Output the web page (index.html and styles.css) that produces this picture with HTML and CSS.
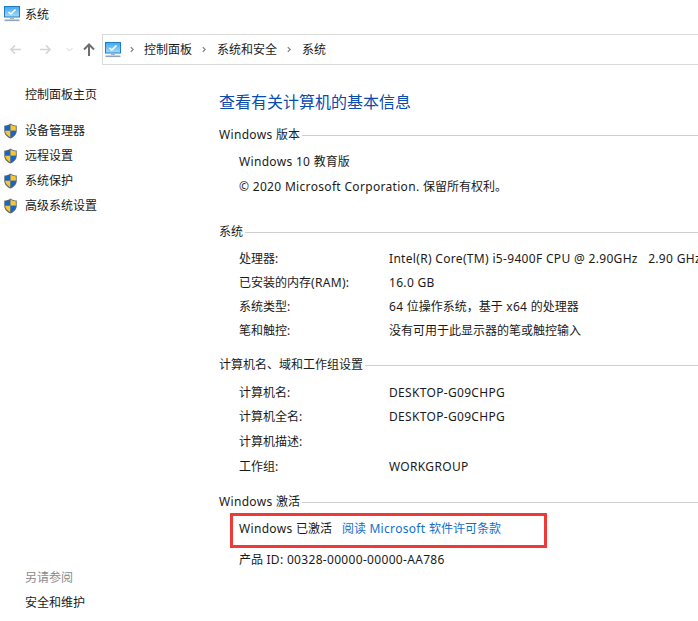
FILE: index.html
```html
<!DOCTYPE html>
<html lang="zh-CN">
<head>
<meta charset="utf-8">
<title>系统</title>
<link rel="stylesheet" href="styles.css">
</head>
<body>
<svg class="defs" width="0" height="0" aria-hidden="true">
  <defs>
    <linearGradient id="scr" x1="0" y1="0" x2="0" y2="1"><stop offset="0" stop-color="#3fa9ee"/><stop offset="1" stop-color="#a6dcfa"/></linearGradient>
    <symbol id="pc" viewBox="0 0 16 16">
      <rect x="0.5" y="0.5" width="15" height="10.5" fill="url(#scr)" stroke="#1f7fc4"/>
      <path d="M4.5 6l2.4 2 4.6-4.5" fill="none" stroke="#fff" stroke-width="1.6"/>
      <rect x="6" y="11.5" width="4" height="1.5" fill="#9fb2c2"/>
      <rect x="0.5" y="13.5" width="15" height="1.6" fill="#8ea3b5"/>
    </symbol>
    <symbol id="shield" viewBox="0 0 16 18">
      <path d="M8 0.5c2 1.600 4.400 2.300 7 2.400v6c0 3.800-3 6.600-7 8.600-4-2-7-4.800-7-8.600v-6c2.600-.1 5-.8 7-2.400z" fill="#5b6470"/>
      <path d="M8 1.800v7H2V3.800c2.200-.2 4.200-.8 6-2z" fill="#1467c8"/>
      <path d="M8 1.800c1.800 1.200 3.800 1.800 6 2v5H8z" fill="#f7c631"/>
      <path d="M2 8.800h6v7.500c-3.400-1.800-6-4.200-6-7.500z" fill="#f7c631"/>
      <path d="M8 8.800h6c0 3.300-2.600 5.700-6 7.500z" fill="#1467c8"/>
    </symbol>
  </defs>
</svg>
<div class="page">
  <header class="titlebar">
    <svg class="title-icon"><use href="#pc"/></svg>
    <span>系统</span>
  </header>
  <nav class="navbar">
    <div class="nav-buttons">
      <svg class="nav-arrow" viewBox="0 0 14 12"><path d="M13 6H2M6.500 1.500L2 6l4.500 4.500" class="arrow-light"/></svg>
      <svg class="nav-arrow fwd" viewBox="0 0 14 12"><path d="M1 6h11M7.500 1.500L12 6l-4.500 4.500" class="arrow-light"/></svg>
      <svg class="nav-drop" viewBox="0 0 7 5"><path d="M.5 1L3.500 4l3-3" class="arrow-drop"/></svg>
      <svg class="nav-up" viewBox="0 0 12 13"><path d="M6 13V2M1 6.500L6 1.500l5 5" class="arrow-dark"/></svg>
    </div>
    <div class="address">
      <svg class="addr-icon"><use href="#pc"/></svg>
      <svg class="crumb-sep first" viewBox="0 0 5 7"><path d="M1 .5l3 3-3 3"/></svg>
      <span>控制面板</span>
      <svg class="crumb-sep" viewBox="0 0 5 7"><path d="M1 .5l3 3-3 3"/></svg>
      <span>系统和安全</span>
      <svg class="crumb-sep" viewBox="0 0 5 7"><path d="M1 .5l3 3-3 3"/></svg>
      <span>系统</span>
    </div>
  </nav>
  <div class="body">
    <aside class="sidebar">
      <div class="side-home">控制面板主页</div>
      <ul class="side-list">
        <li><svg class="shield"><use href="#shield"/></svg>设备管理器</li>
        <li><svg class="shield"><use href="#shield"/></svg>远程设置</li>
        <li><svg class="shield"><use href="#shield"/></svg>系统保护</li>
        <li><svg class="shield"><use href="#shield"/></svg>高级系统设置</li>
      </ul>
      <div class="side-foot">
        <div class="see-also">另请参阅</div>
        <div class="see-link">安全和维护</div>
      </div>
    </aside>
    <main class="content">
      <h1>查看有关计算机的基本信息</h1>
      <section class="sec sec-edition">
        <h2><span><span class="en">Windows </span>版本</span></h2>
        <div class="line"><span class="en">Windows 10 </span>教育版</div>
        <div class="line"><span class="en">© 2020 Microsoft Corporation. </span>保留所有权利。</div>
      </section>
      <section class="sec sec-system">
        <h2><span>系统</span></h2>
        <dl class="rows tight">
          <dt>处理器:</dt><dd><span class="en">Intel(R) Core(TM) i5-9400F CPU @ 2.90GHz &nbsp; 2.90 GHz</span></dd>
          <dt>已安装的内存<span class="en">(RAM)</span>:</dt><dd><span class="en">16.0 GB</span></dd>
          <dt>系统类型:</dt><dd><span class="en">64 </span>位操作系统，基于<span class="en"> x64 </span>的处理器</dd>
          <dt>笔和触控:</dt><dd>没有可用于此显示器的笔或触控输入</dd>
        </dl>
      </section>
      <section class="sec sec-name">
        <h2><span>计算机名、域和工作组设置</span></h2>
        <dl class="rows name-rows">
          <dt>计算机名:</dt><dd><span class="en">DESKTOP-G09CHPG</span></dd>
          <dt>计算机全名:</dt><dd><span class="en">DESKTOP-G09CHPG</span></dd>
          <dt>计算机描述:</dt><dd></dd>
          <dt>工作组:</dt><dd><span class="en">WORKGROUP</span></dd>
        </dl>
      </section>
      <section class="sec sec-activation">
        <h2><span><span class="en">Windows </span>激活</span></h2>
        <div class="activated">
          <span><span class="en">Windows </span>已激活</span><a class="license">阅读<span class="en"> Microsoft </span>软件许可条款</a>
          <div class="highlight"></div>
        </div>
        <div class="product">产品<span class="en"> ID: 00328-00000-00000-AA786</span></div>
      </section>
    </main>
  </div>
</div>
</body>
</html>
```
FILE: styles.css
```css
* { box-sizing: border-box; }
html, body { margin: 0; padding: 0; background: #fff; }
body {
  font: 12px/16px "Noto Sans", "Noto Sans CJK SC", sans-serif;
  color: #1a1a1a;
  overflow: hidden;
}
.defs { position: absolute; }
.en { letter-spacing: .32px; }
.page { width: 698px; height: 621px; overflow: hidden; display: flex; flex-direction: column; }

.titlebar { height: 34px; padding: 6px 0 0 4px; display: flex; align-items: flex-start; gap: 5px; line-height: 17px; }
.title-icon { width: 16px; height: 16px; }

.navbar { height: 31px; display: flex; }
.nav-buttons { width: 102px; flex: none; display: flex; align-items: center; padding-left: 9px; }
.nav-arrow { width: 13px; height: 11px; }
.nav-arrow.fwd { margin-left: 17px; }
.nav-drop { width: 7px; height: 5px; margin-left: 14px; }
.nav-up { width: 12px; height: 13px; margin-left: 10px; }
.arrow-light { fill: none; stroke: #d4d4d4; stroke-width: 1.6; }
.arrow-drop { fill: none; stroke: #d4d4d4; stroke-width: 1; }
.arrow-dark { fill: none; stroke: #6e6e6e; stroke-width: 2; }

.address {
  flex: none;
  width: 610px;
  border: 1px solid #d9d9d9;
  display: flex;
  align-items: center;
  padding-left: 2px;
}
.addr-icon { width: 16px; height: 16px; margin-right: 8px; }
.crumb-sep { width: 4px; height: 7px; margin: 0 11px 0 10px; fill: none; stroke: #7f7f7f; stroke-width: 1.5; }
.crumb-sep.first { margin-left: 1px; margin-right: 10px; }

.body { flex: 1; display: flex; min-height: 0; }
.sidebar { width: 219px; flex: none; display: flex; flex-direction: column; padding-top: 22px; }
.side-home { padding-left: 25px; height: 16px; }
.side-list { list-style: none; margin: 15px 0 0; padding: 0; }
.side-list li { height: 25px; display: flex; align-items: center; gap: 7px; padding-left: 3px; }
.shield { width: 15px; height: 16px; flex: none; }
.side-foot { margin-top: auto; padding: 0 0 10px 25px; }
.see-also { color: #8a8a8a; height: 25px; }
.see-link { height: 16px; }

.content { flex: 1; min-width: 0; padding-top: 27px; }
h1 { margin: 0; font-size: 16px; line-height: 20px; font-weight: 400; color: #0a4bb0; }
.sec h2 { margin: 0; font-size: 12px; font-weight: 400; line-height: 16px; display: flex; align-items: center; }
.sec h2::after { content: ""; flex: 1; height: 1px; background: #cfcfcf; margin-left: 2px; margin-top: 1px; }
.sec-edition { margin-top: 15px; }
.line { margin-left: 20px; height: 25px; line-height: 16px; }
.sec-edition .line:first-of-type { margin-top: 11px; }
.sec-system { margin-top: 20px; }
.sec-name { margin-top: 10px; }
.sec-activation { margin-top: 10px; }

.rows { display: grid; grid-template-columns: 150px 1fr; grid-auto-rows: 25px; margin: 11px 0 0 20px; }
.rows.tight { grid-auto-rows: 24px; }
.rows dt, .rows dd { margin: 0; white-space: nowrap; }
.name-rows { margin-top: 12px; grid-template-rows: 24px 25px 25px 25px; }

.activated { position: relative; margin: 11px 0 0 20px; height: 31px; white-space: nowrap; }
.license { color: #0f6fd0; margin-left: 10px; }
.highlight { position: absolute; left: -9px; top: -8px; width: 317px; height: 35px; border: 3px solid #ef3a3a; }
.product { margin-left: 20px; }
```
